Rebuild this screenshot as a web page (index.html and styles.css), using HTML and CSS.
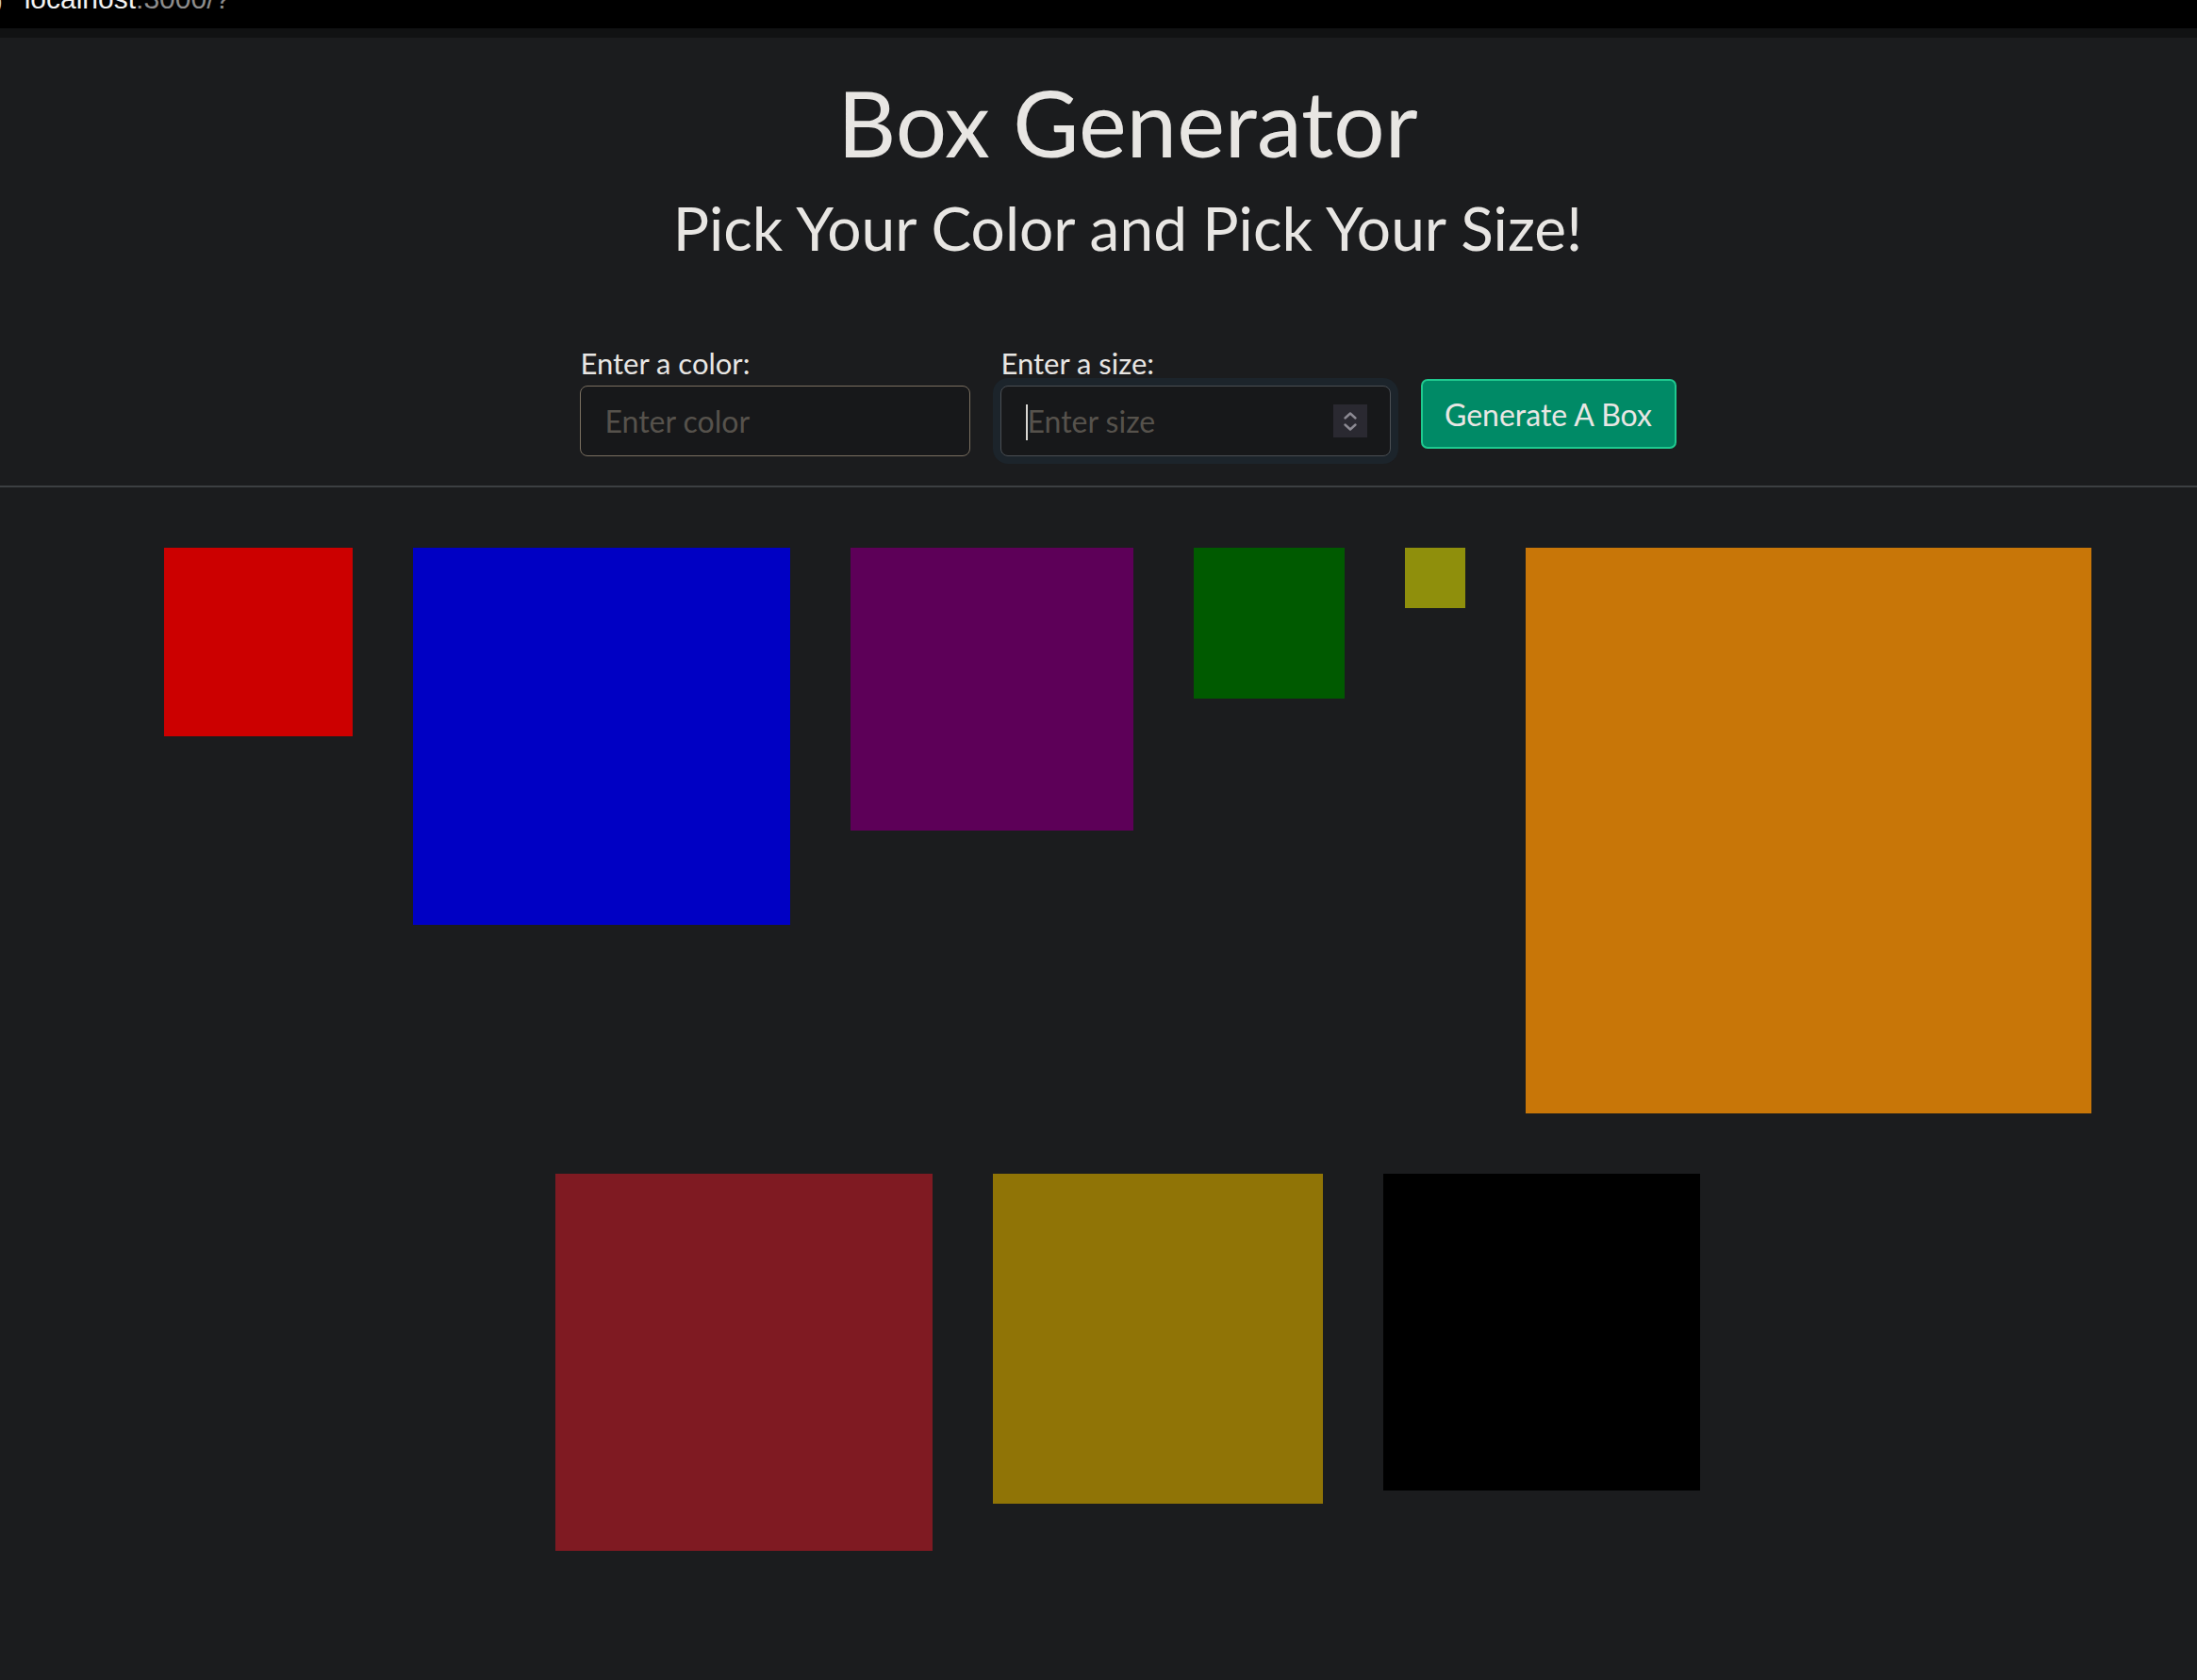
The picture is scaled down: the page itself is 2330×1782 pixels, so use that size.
FILE: index.html
```html
<!DOCTYPE html>
<html lang="en">
<head>
<meta charset="utf-8">
<title>Box Generator</title>
<link rel="stylesheet" href="styles.css">
</head>
<body>
  <div class="browser-bar">
    <span class="bar-icon">)</span>
    <span class="url"><span class="host">localhost</span><span class="port">:3000/?</span></span>
  </div>
  <div class="tab-strip"></div>
  <main class="page">
    <header class="header">
      <h1 class="title">Box Generator</h1>
      <h2 class="subtitle">Pick Your Color and Pick Your Size!</h2>
      <form class="form">
        <div class="field">
          <label class="label" for="color">Enter a color:</label>
          <input class="input input-color" id="color" type="text" placeholder="Enter color">
        </div>
        <div class="field">
          <label class="label" for="size">Enter a size:</label>
          <div class="input-wrap">
            <input class="input input-size" id="size" type="text" placeholder="Enter size">
            <span class="caret"></span>
            <span class="spinner">
              <svg width="18" height="26" viewBox="0 0 18 26" fill="none" stroke="#8c8a93" stroke-width="2.4" stroke-linecap="round" stroke-linejoin="round">
                <path d="M3.5 9.5 L9 4.5 L14.5 9.5"/>
                <path d="M3.5 16.5 L9 21.5 L14.5 16.5"/>
              </svg>
            </span>
          </div>
        </div>
        <button class="btn" type="button">Generate A Box</button>
      </form>
    </header>
  </main>
  <hr class="divider">
  <section class="boxes">
    <div class="box" style="width:200px;height:200px;background:#cc0000"></div>
    <div class="box" style="width:400px;height:400px;background:#0000c4"></div>
    <div class="box" style="width:300px;height:300px;background:#5d0058"></div>
    <div class="box" style="width:160px;height:160px;background:#005a00"></div>
    <div class="box" style="width:64px;height:64px;background:#8f8f0c"></div>
    <div class="box" style="width:600px;height:600px;background:#c87608"></div>
    <div class="box" style="width:400px;height:400px;background:#7f1a22"></div>
    <div class="box" style="width:350px;height:350px;background:#907406"></div>
    <div class="box" style="width:336px;height:336px;background:#000000"></div>
  </section>
</body>
</html>
```

FILE: styles.css
```css
* { box-sizing: border-box; }

html, body {
  margin: 0;
  padding: 0;
  background: #1b1c1e;
  color: #e8e6e3;
  font-family: Lato, "Noto Sans", sans-serif;
}

body {
  min-height: 1782px;
}

.browser-bar {
  height: 30px;
  background: #000;
  overflow: hidden;
  display: flex;
  align-items: flex-end;
  font-family: "Liberation Sans", Arial, sans-serif;
  font-size: 30px;
  line-height: 1;
}

.bar-icon {
  color: #cfcfcf;
  margin-left: -6px;
  margin-bottom: 16px;
  font-size: 26px;
}

.url {
  margin-left: 23px;
  margin-bottom: 16px;
}

.host { color: #f2f2f2; }
.port { color: #8d8d8d; }

.tab-strip {
  height: 10px;
  background: #111213;
}

.page {
  padding-left: 62px;
}

.header {
  display: flex;
  flex-direction: column;
  align-items: center;
  padding-top: 32px;
}

.title {
  margin: 0;
  font-size: 96px;
  font-weight: 400;
  line-height: 115px;
}

.subtitle {
  margin: 17px 0 0;
  font-size: 64px;
  font-weight: 400;
  line-height: 76px;
}

.form {
  display: flex;
  align-items: flex-end;
  gap: 32px;
  margin-top: 84px;
  padding-bottom: 31px;
}

.field {
  display: flex;
  flex-direction: column;
}

.label {
  font-size: 31px;
  line-height: 43px;
  margin-bottom: 2px;
  margin-left: 1px;
}

.input-wrap {
  position: relative;
}

.input {
  width: 414px;
  height: 75px;
  border-radius: 8px;
  background: #17181a;
  color: #e8e6e3;
  font-family: Lato, "Noto Sans", sans-serif;
  font-size: 32px;
  padding: 0 26px;
  outline: none;
}

.input::placeholder {
  color: #56524c;
}

.input-color {
  border: 1.5px solid #7a6f60;
}

.input-size {
  border: 1.5px solid #4a4e53;
  box-shadow: 0 0 0 8px #1c242b;
  padding-left: 28px;
}

.caret {
  position: absolute;
  left: 27px;
  top: 20px;
  width: 2px;
  height: 38px;
  background: #d8d6d2;
}

.spinner {
  position: absolute;
  right: 25px;
  top: 20px;
  width: 36px;
  height: 35px;
  background: #2a2931;
  display: flex;
  align-items: center;
  justify-content: center;
}

.btn {
  width: 271px;
  height: 74px;
  margin-bottom: 8px;
  background: #008a66;
  border: 2px solid #1fc98f;
  border-radius: 7px;
  color: #e8e6e3;
  font-family: Lato, "Noto Sans", sans-serif;
  font-size: 32px;
  padding: 0;
}

.divider {
  margin: 0;
  border: 0;
  height: 2px;
  background: #3c3f42;
}

.boxes {
  display: flex;
  flex-wrap: wrap;
  justify-content: center;
  align-items: flex-start;
  padding: 32px 0 32px 62px;
}

.box {
  margin: 32px;
  flex: none;
}
```
